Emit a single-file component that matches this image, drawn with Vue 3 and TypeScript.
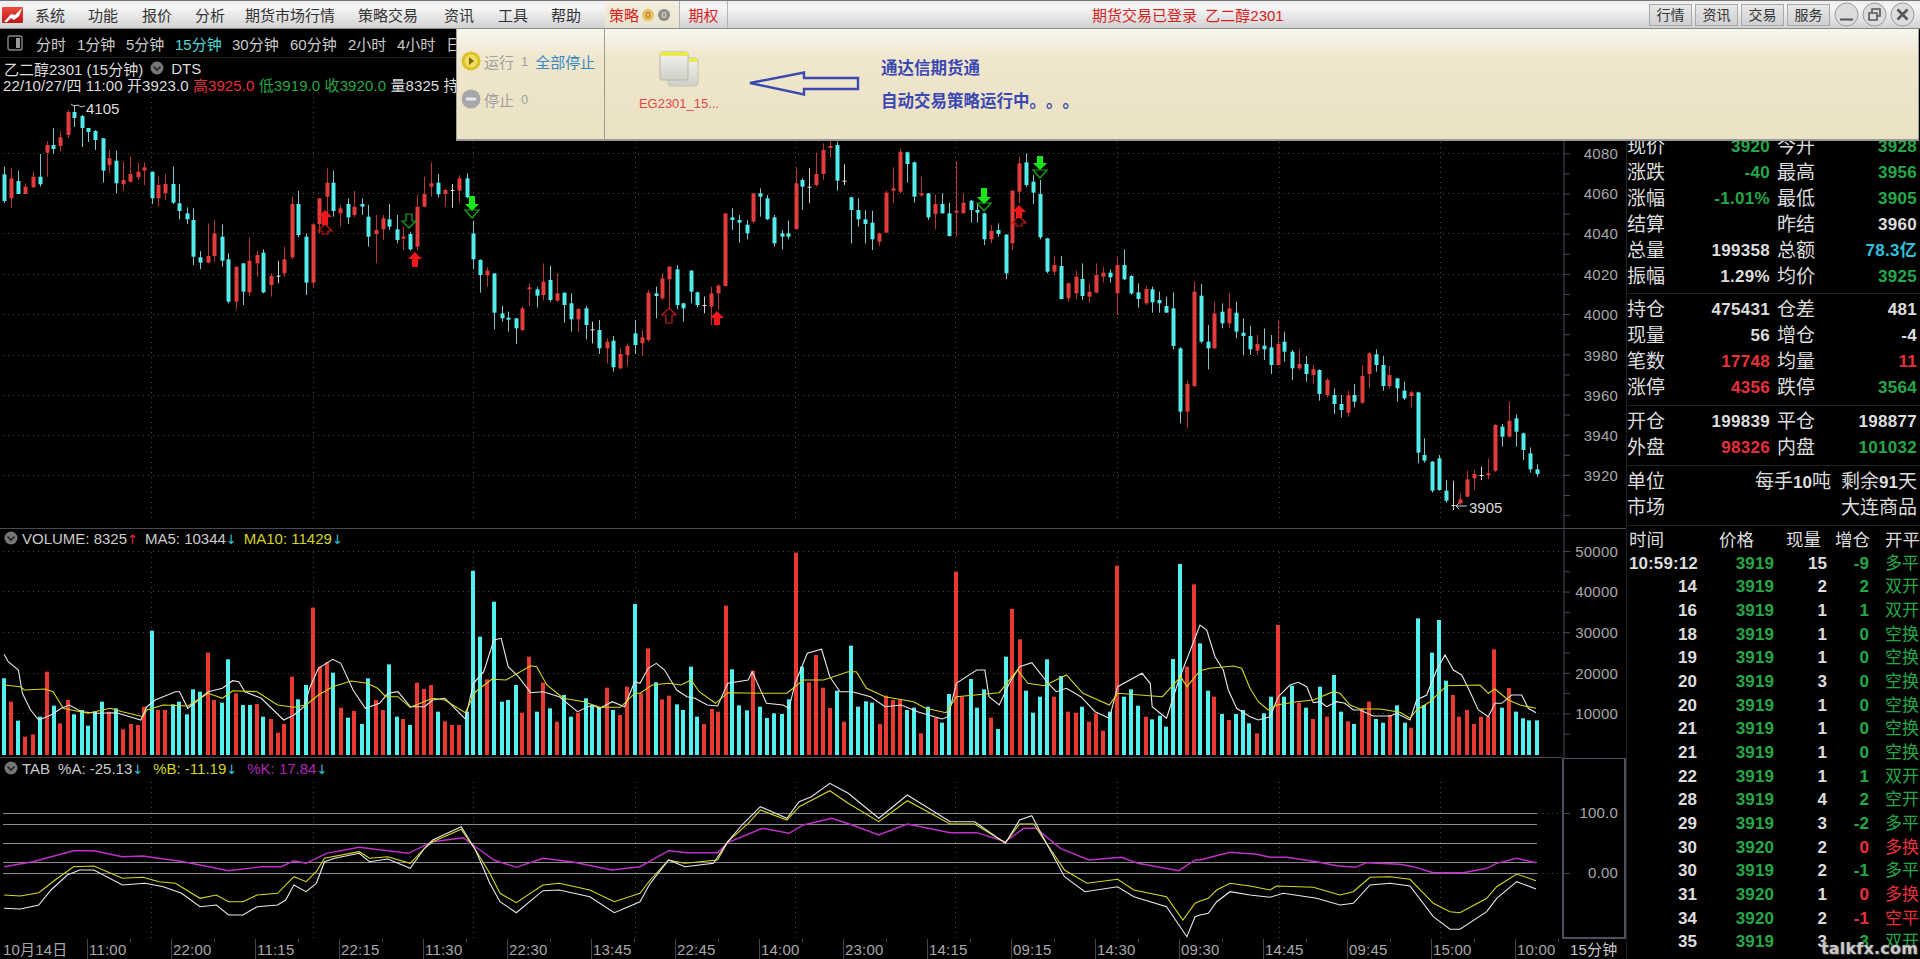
<template>
  <div class="app">
    <!-- top menu bar -->
    <header class="topbar">
      <div class="logo">
        <svg width="21" height="16" viewBox="0 0 21 16">
          <defs>
            <linearGradient id="lg" x1="0" y1="0" x2="0" y2="1">
              <stop offset="0" stop-color="#f04a40" />
              <stop offset="1" stop-color="#b81818" />
            </linearGradient>
          </defs>
          <rect width="21" height="16" rx="1" fill="url(#lg)" />
          <path d="M2 15 L9 7 L13 8 L20 1 L17 9 L12 13 L9 11 L5 15 Z" fill="#fff" />
        </svg>
      </div>
      <nav class="menu">
        <span v-for="m in menus" :key="m">{{ m }}</span>
      </nav>
      <div class="tabs">
        <div class="tab on">
          策略
          <i class="dot gold">0</i>
          <i class="dot grey">0</i>
        </div>
        <div class="tab">期权</div>
      </div>
      <div class="status">期货交易已登录&nbsp; 乙二醇2301</div>
      <div class="sys-btns">
        <span v-for="b in sysBtns" :key="b">{{ b }}</span>
      </div>
      <div class="win-btns">
        <svg width="25" height="25" viewBox="0 0 25 25"><circle cx="12.5" cy="12.5" r="11.5" class="wb" /><path d="M6 17.5h13" stroke="#555" stroke-width="2" /></svg>
        <svg width="25" height="25" viewBox="0 0 25 25"><circle cx="12.5" cy="12.5" r="11.5" class="wb" /><path d="M7 11h8v7H7z M10 11V7h8v7h-3" fill="none" stroke="#555" stroke-width="1.6" /></svg>
        <svg width="25" height="25" viewBox="0 0 25 25"><circle cx="12.5" cy="12.5" r="11.5" class="wb" /><path d="M7.5 7.5l10 10M17.5 7.5l-10 10" stroke="#555" stroke-width="2.6" /></svg>
      </div>
    </header>

    <div class="body">
      <section class="charts">
        <div class="toolbar">
          <svg class="toggle" width="16" height="16" viewBox="0 0 16 16">
            <rect x="1" y="1" width="14" height="14" rx="2" fill="none" stroke="#888" stroke-width="1.4" />
            <rect x="9" y="3" width="4" height="10" fill="#999" />
          </svg>
          <div class="periods">
            <span v-for="p in periods" :key="p" :class="{ cur: p === '15分钟' }">{{ p }}</span>
          </div>
        </div>

        <!-- price pane -->
        <div class="pane price-pane">
          <svg class="plot" width="1626" height="470" viewBox="0 58 1626 470">
            <g class="dots">
              <line v-for="y in priceTicks" :key="y.v" x1="3" x2="1564" :y1="y.y" :y2="y.y" />
              <line v-for="x in vGrid" :key="x" :x1="x" :x2="x" y1="92" y2="520" />
            </g>
            <g v-for="(c, i) in candles" :key="i" :class="c.kind">
              <line class="wick" :x1="c.x + 0.5" :x2="c.x + 0.5" :y1="c.hi" :y2="c.lo" />
              <rect class="bd" :x="c.x - 1.5" :y="c.top" width="4" :height="c.h" />
            </g>
            <polygon v-for="(m, i) in markers" :key="i" :points="m.pts" :class="m.cls" />
            <path d="M71 104l3 2 4-1 3 2 4-1" class="lbl-mark" />
            <text x="86" y="114" class="peak">4105</text>
            <path d="M1467 506h-11l3-3m-3 3l3 3" class="lbl-mark" />
            <text x="1469" y="513" class="peak">3905</text>
            <line x1="1564" x2="1564" y1="58" y2="528" class="axis" />
            <line v-for="y in priceMinor" :key="y" x1="1564" x2="1570" :y1="y" :y2="y" class="axis" />
            <text v-for="y in priceTicks" :key="y.v" x="1618" :y="y.y + 5" class="tick">{{ y.v }}</text>
          </svg>
          <div class="legend-main">
            <div class="l1">
              <span>乙二醇2301 (15分钟)</span>
              <svg class="chev" width="14" height="14" viewBox="0 0 14 14"><circle cx="7" cy="7" r="6.5" fill="#777" /><path d="M3.5 5.5L7 9l3.5-3.5" fill="none" stroke="#222" stroke-width="1.6" /></svg>
              <span>DTS</span>
            </div>
            <div class="l2">
              <span>22/10/27/四 11:00 开3923.0 </span>
              <span class="rd">高3925.0 </span>
              <span class="gn">低3919.0 收3920.0 </span>
              <span>量8325 持</span>
            </div>
          </div>
        </div>

        <!-- volume pane -->
        <div class="pane vol-pane">
          <svg class="plot" width="1626" height="230" viewBox="0 528 1626 230">
            <g class="dots">
              <line v-for="y in volTicks" :key="y.v" x1="3" x2="1564" :y1="y.y" :y2="y.y" />
              <line v-for="x in vGrid" :key="x" :x1="x" :x2="x" y1="552" y2="755" />
            </g>
            <rect v-for="(b, i) in volBars" :key="i" :x="b.x - 2" :y="b.top" width="4" :height="755 - b.top" :fill="b.red ? '#e83a32' : '#53f0f0'" />
            <polyline :points="ma5" class="ln white" />
            <polyline :points="ma10" class="ln yellow" />
            <line x1="0" x2="1626" y1="528.5" y2="528.5" class="axis" />
            <line x1="0" x2="1562" y1="757.5" y2="757.5" class="axis" />
            <line x1="1564" x2="1564" y1="528" y2="758" class="axis" />
            <line v-for="y in volMinor" :key="y" x1="1564" x2="1570" :y1="y" :y2="y" class="axis" />
            <text v-for="y in volTicks" :key="y.v" x="1618" :y="y.y + 5" class="tick">{{ y.v }}</text>
          </svg>
          <div class="legend">
            <svg class="chev" width="14" height="14" viewBox="0 0 14 14"><circle cx="7" cy="7" r="6.5" fill="#777" /><path d="M3.5 5.5L7 9l3.5-3.5" fill="none" stroke="#222" stroke-width="1.6" /></svg>
            <span class="w">VOLUME: 8325<b class="ar rd">↑</b></span>
            <span class="w">MA5: 10344<b class="ar cy">↓</b></span>
            <span class="yl">MA10: 11429<b class="ar cy">↓</b></span>
          </div>
        </div>

        <!-- TAB pane -->
        <div class="pane tab-pane">
          <svg class="plot" width="1626" height="181" viewBox="0 758 1626 181">
            <g class="dots">
              <line v-for="x in vGrid" :key="x" :x1="x" :x2="x" y1="782" y2="939" />
              <line x1="1537" x2="1564" y1="813.5" y2="813.5" />
              <line x1="1537" x2="1564" y1="873.5" y2="873.5" />
            </g>
            <line v-for="y in tabLevels" :key="y" x1="3" x2="1537" :y1="y" :y2="y" class="level" />
            <polyline :points="tabK" class="ln purple" />
            <polyline :points="tabB" class="ln yellow" />
            <polyline :points="tabA" class="ln white" />
            <rect x="1563" y="758" width="62" height="180" class="tab-box" />
            <line x1="1564" x2="1570" y1="813.5" y2="813.5" class="axis" />
            <line x1="1564" x2="1570" y1="873.5" y2="873.5" class="axis" />
            <text x="1618" y="818" class="tick">100.0</text>
            <text x="1618" y="878" class="tick">0.00</text>
          </svg>
          <div class="legend t">
            <svg class="chev" width="14" height="14" viewBox="0 0 14 14"><circle cx="7" cy="7" r="6.5" fill="#777" /><path d="M3.5 5.5L7 9l3.5-3.5" fill="none" stroke="#222" stroke-width="1.6" /></svg>
            <span class="w tabname">TAB</span>
            <span class="w">%A: -25.13<b class="ar cy">↓</b></span>
            <span class="yl">%B: -11.19<b class="ar cy">↓</b></span>
            <span class="pu">%K: 17.84<b class="ar cy">↓</b></span>
          </div>
        </div>

        <div class="timeaxis">
          <span class="first">10月14日</span>
          <span v-for="t in times" :key="t" class="tm">{{ t }}</span>
          <span class="per">15分钟</span>
        </div>
      </section>

      <!-- quote panel -->
      <aside class="quote">
        <div class="block">
          <div v-for="r in quoteA" :key="r[0]" class="row">
            <span>{{ r[0] }}</span><b :class="r[2]">{{ r[1] }}</b><span class="l2nd">{{ r[3] }}</span><b :class="r[5]">{{ r[4] }}</b>
          </div>
        </div>
        <div class="block">
          <div v-for="r in quoteB" :key="r[0]" class="row">
            <span>{{ r[0] }}</span><b :class="r[2]">{{ r[1] }}</b><span class="l2nd">{{ r[3] }}</span><b :class="r[5]">{{ r[4] }}</b>
          </div>
        </div>
        <div class="block">
          <div v-for="r in quoteC" :key="r[0]" class="row">
            <span>{{ r[0] }}</span><b :class="r[2]">{{ r[1] }}</b><span class="l2nd">{{ r[3] }}</span><b :class="r[5]">{{ r[4] }}</b>
          </div>
        </div>
        <div class="block">
          <div class="row wide">
            <span>单位</span>
            <div class="right"><span>每手<b>10</b>吨</span><span>剩余<b>91</b>天</span></div>
          </div>
          <div class="row wide">
            <span>市场</span>
            <div class="right"><span>大连商品</span></div>
          </div>
        </div>
        <div class="ticks">
          <div class="thead">
            <span>时间</span><span>价格</span><span>现量</span><span>增仓</span><span>开平</span>
          </div>
          <div v-for="(t, i) in tickRows" :key="i" class="trow">
            <b>{{ t[0] }}</b>
            <b class="gn">{{ t[1] }}</b>
            <b>{{ t[2] }}</b>
            <b :class="t[5]">{{ t[3] }}</b>
            <span :class="t[5]">{{ t[4] }}</span>
          </div>
        </div>
      </aside>
    </div>

    <!-- strategy popup over the chart -->
    <div class="popup">
      <div class="pop-left">
        <div class="pop-row">
          <svg width="20" height="20" viewBox="0 0 20 20"><circle cx="10" cy="10" r="9.5" fill="#dcc028" /><circle cx="10" cy="10" r="6.5" fill="#f0dc60" /><path d="M8 6l5 4-5 4z" fill="#7a6a10" /></svg>
          <span class="st">运行</span><span class="num">1</span>
          <a class="stopall">全部停止</a>
        </div>
        <div class="pop-row second">
          <svg width="20" height="20" viewBox="0 0 20 20"><circle cx="10" cy="10" r="9.5" fill="#a8a8ac" /><rect x="5" y="8.5" width="10" height="3" fill="#e8e8e8" /></svg>
          <span class="st">停止</span><span class="num">0</span>
        </div>
      </div>
      <div class="pop-main">
        <div class="strategy">
          <svg width="40" height="36" viewBox="0 0 40 36">
            <defs>
              <linearGradient id="dc" x1="0" y1="0" x2="0" y2="1">
                <stop offset="0" stop-color="#f4f4f0" />
                <stop offset="1" stop-color="#cfcfc8" />
              </linearGradient>
            </defs>
            <rect x="9" y="7" width="30" height="28" rx="3" fill="url(#dc)" stroke="#c8c4b0" />
            <rect x="30" y="7" width="8" height="4" fill="#ece850" />
            <rect x="1" y="1" width="28" height="28" rx="2" fill="url(#dc)" stroke="#b8b6a8" />
            <rect x="1" y="1" width="28" height="4" fill="#ece850" />
          </svg>
          <span class="sname">EG2301_15...</span>
        </div>
        <svg class="arrow" width="112" height="25" viewBox="0 0 112 25">
          <polygon points="2,12 56,1.5 56,7 110,7 110,18 56,18 56,23.5" fill="none" stroke="#3b49b0" stroke-width="2.4" />
        </svg>
        <div class="note">
          <div>通达信期货通</div>
          <div>自动交易策略运行中。。。</div>
        </div>
      </div>
    </div>

    <div class="watermark">talkfx.com</div>
  </div>
</template>

<script setup lang="ts">
const menus = ['系统', '功能', '报价', '分析', '期货市场行情', '策略交易', '资讯', '工具', '帮助']
const sysBtns = ['行情', '资讯', '交易', '服务']
const periods = ['分时', '1分钟', '5分钟', '15分钟', '30分钟', '60分钟', '2小时', '4小时', '日']
const times = ['11:00', '22:00', '11:15', '22:15', '11:30', '22:30', '13:45', '22:45', '14:00', '23:00', '14:15', '09:15', '14:30', '09:30', '14:45', '09:45', '15:00', '10:00']

const vGrid = [151, 313, 473, 635, 795, 955, 1117, 1279, 1440].map(v => v + 0.5)

const priceTicks = [
  { v: 4080, y: 153.5 }, { v: 4060, y: 193.5 }, { v: 4040, y: 233.5 }, { v: 4020, y: 274.5 }, { v: 4000, y: 314.5 },
  { v: 3980, y: 355.5 }, { v: 3960, y: 395.5 }, { v: 3940, y: 435.5 }, { v: 3920, y: 475.5 },
]
const priceMinor = Array.from({ length: 22 }, (_, i) => 93.5 + i * 20.1)
const volTicks = [
  { v: 50000, y: 551.5 }, { v: 40000, y: 591.5 }, { v: 30000, y: 632.5 }, { v: 20000, y: 673.5 }, { v: 10000, y: 713.5 },
]
const volMinor = Array.from({ length: 10 }, (_, i) => 551.5 + i * 20.3)
const tabLevels = [813.5, 824.5, 843.5, 862.5, 873.5]

// values below are read off the 3x crops: [x in crop, y in crop]
function bars(src: string, base: number, sx: number) {
  return src.trim().split(/\s+/).map(t => {
    const [a, b] = t.slice(1).split(',').map(Number)
    return { x: Math.round(base + a / sx), red: t[0] === 'r', top: 520 + b / 3 }
  })
}

const volBars = [
  ...bars(`c10,475 r28,545 c44,602 r62,650 r80,643 c97,590 r114,455 c132,557 r148,610 r167,540 c182,583 c200,570 c215,617 c233,575 c251,545 r267,575 c285,565 r302,628 r320,612 r337,615 r354,560 c372,332 r388,570 r405,570 c423,553 c438,545 c457,583 c474,508 c491,515 r509,398 r525,540 c544,548 c559,418 r577,520 c595,555 c612,555 r630,552 c645,590 r663,597 r680,638 r697,612 r715,470 c730,538 c749,495 r767,263 r784,440 r801,427 c815,458 r835,563 c853,593 r868,573 c886,612 c902,475 r920,540 r938,570 c953,433 c972,590 r988,597 c1005,615 r1021,488 r1038,507 r1057,495 c1073,575 r1091,604 r1107,615 r1125,615 c1143,575 c1159,152 c1177,350 r1193,478 c1211,245 c1229,545 c1245,540 c1263,495 r1280,578 r1297,410 c1315,575 r1331,488 c1348,565 r1365,605 c1382,525 c1400,590 r1417,578 c1435,535 c1450,557 c1468,563 r1486,503 c1503,570 r1520,585 r1537,500 c1555,252`, 0, 2.45),
  ...bars(`r2,520 r19,385 c38,487 r54,538 r71,527 c90,553 c106,570 c124,440 c140,590 r157,612 r176,567 r191,575 r210,257 c225,448 c243,556 c262,571 r278,452 c295,560 c311,594 c329,580 c348,582 c364,538 r381,98 c397,440 r415,487 r430,405 r449,503 r466,564 c483,512 r501,605 c516,377 c534,560 c553,544 c568,548 r587,612 r603,527 r620,540 r637,540 c654,570 c672,563 r688,640 c706,560 r724,593 c740,608 c757,522 r773,155 r790,530 c810,477 c826,563 c844,508 r860,593 c877,627 c896,410 r911,267 r930,358 c945,512 c963,578 c981,530 c997,418 r1015,530 c1031,468 r1048,575 r1067,578 c1083,560 r1101,605 r1117,580 r1134,632 c1152,575 r1169,137 c1187,530 c1203,508 c1220,557 r1239,590 c1255,598 c1273,587 c1288,620 c1306,417 c1322,132 r1340,440 r1358,193`, 640, 2.45),
  ...bars(`c0,370 c24,512 r43,530 c65,582 r88,600 c107,582 c128,570 c148,610 r170,640 c193,580 c212,530 r234,315 c253,530 c275,497 r297,548 c318,563 r339,597 c359,500 r381,590 c403,465 c422,575 r444,604 c463,612 r486,565 r508,545 c527,597 c549,608 r569,585 c590,556 c614,608 r632,623 c654,295 c673,555 c696,398 c717,300 c737,482 r760,525 r778,590 r800,570 r823,612 r842,590 r863,590 r883,388 c905,563 r928,504 c947,575 c968,595 c988,601 c1010,601`, 1200, 3),
]

function line(segs: [number, number, string][]) {
  return segs.map(([base, sx, s]) =>
    s.trim().split(/\s+/).map(p => {
      const [a, b] = p.split(',').map(Number)
      return `${(base + a / sx).toFixed(1)},${(520 + b / 3).toFixed(1)}`
    }).join(' ')
  ).join(' ')
}

const ma5 = line([
  [0, 2.45, '10,403 20,425 45,450 55,520 75,570 95,600 125,585 150,565 170,555 200,575 240,580 285,578 345,600 360,560 380,540 430,515 440,515 460,565 510,515 545,505 570,482 585,485 600,515 640,535 695,600 720,585 745,560 760,500 780,445 815,418 835,430 865,510 895,565 930,550 950,520 975,515 1005,560 1040,560 1060,540 1090,535 1140,597 1160,490 1185,455 1210,360 1228,355 1245,440 1270,470 1300,518 1330,515 1370,530 1415,575 1450,555 1470,565 1500,545 1530,560 1555,485'],
  [640, 2.45, '0,490 20,445 40,430 60,450 90,510 115,530 135,535 165,555 190,558 215,490 265,480 275,455 310,550 350,555 365,565 380,490 410,400 445,388 465,470 490,515 520,515 565,530 600,560 640,555 680,575 740,597 755,590 775,490 825,450 845,450 855,530 880,555 905,490 930,440 960,428 1000,490 1020,515 1045,505 1080,530 1115,575 1150,595 1170,500 1230,460 1250,490 1255,560 1290,595 1320,480'],
  [1200, 3, '0,315 20,330 45,410 70,450 85,510 110,565 150,590 175,600 210,590 235,530 270,495 295,487 320,500 340,548 360,545 380,560 410,545 435,550 460,570 480,570 520,588 570,588 590,580 630,600 650,540 680,525 710,450 735,405 760,450 785,465 810,515 835,570 865,590 885,550 905,550 935,525 965,525 985,565 1008,578'],
])
const ma10 = line([
  [0, 2.45, '10,495 50,500 60,510 110,507 130,515 155,565 175,570 215,580 270,565 300,575 350,590 360,570 400,555 460,558 510,520 545,535 570,512 630,515 680,555 720,562 750,555 780,525 815,500 860,483 900,490 925,505 945,530 975,530 1005,562 1060,535 1090,540 1140,578 1165,515 1205,478 1240,480 1300,437 1315,440 1340,495 1380,535 1430,545 1470,562 1520,562 1555,520'],
  [640, 2.45, '0,520 30,495 70,490 100,495 125,480 145,515 185,550 215,518 300,520 360,520 400,480 450,480 510,455 530,455 555,505 600,530 670,545 700,565 750,578 775,530 880,518 925,450 950,490 990,497 1045,465 1085,520 1150,555 1170,520 1280,530 1325,470 1340,500'],
  [1200, 3, '0,452 30,445 100,438 125,445 150,505 175,545 205,570 230,555 290,545 340,540 400,515 420,520 450,555 480,567 540,567 600,577 630,595 650,570 690,545 740,497 840,495 865,520 885,507 925,540 960,555 1008,565'],
])
const tabA = line([
  [0, 2.45, '10,1165 50,1167 95,1155 125,1110 165,1065 195,1050 230,1050 300,1095 355,1090 400,1100 445,1120 490,1160 530,1155 560,1185 595,1185 630,1160 680,1155 700,1140 720,1095 750,1115 775,1090 795,1025 820,1015 880,1000 905,1025 950,1017 1005,1045 1040,985 1060,960 1130,920 1165,990 1200,1090 1225,1145 1265,1178 1330,1112 1370,1110 1445,1130 1505,1178'],
  [640, 2.45, '0,1145 25,1090 70,1020 110,1040 180,1030 215,965 250,915 295,860 360,895 390,845 420,830 465,790 510,820 585,895 655,825 760,905 820,905 895,970 930,900 960,887 985,945 1040,1070 1090,1115 1170,1100 1210,1130 1290,1160 1340,1250 1360,1190'],
  [1200, 3, '0,1185 25,1180 50,1145 90,1115 150,1125 210,1132 250,1120 350,1135 420,1155 460,1150 510,1095 570,1090 630,1098 700,1190 750,1228 780,1228 860,1175 890,1135 950,1085 1008,1107'],
])
const tabB = line([
  [0, 2.45, '10,1125 50,1128 95,1118 135,1080 180,1040 230,1038 300,1075 350,1072 390,1085 430,1090 490,1135 530,1125 560,1145 595,1145 630,1125 680,1120 720,1070 750,1085 775,1055 795,1015 880,995 905,1015 950,1010 1005,1030 1040,985 1060,965 1130,928 1165,990 1200,1060 1225,1120 1265,1148 1330,1095 1370,1090 1445,1110 1505,1145'],
  [640, 2.45, '0,1120 25,1080 70,1020 110,1030 190,1020 215,965 265,910 295,870 360,900 390,860 465,812 510,850 585,905 655,842 760,912 820,912 895,968 930,912 965,912 985,950 1040,1050 1095,1090 1170,1078 1210,1110 1290,1130 1330,1200 1360,1150'],
  [1200, 3, '0,1143 25,1135 50,1110 90,1090 150,1098 210,1110 230,1098 340,1102 420,1125 460,1115 510,1072 570,1070 630,1078 700,1150 750,1175 780,1178 860,1135 890,1100 950,1062 1008,1082'],
])
const tabK = line([
  [0, 2.45, '10,1040 80,1025 180,992 230,992 300,1010 350,1008 450,1025 560,1052 640,1040 690,1040 720,1022 750,1030 800,1000 880,982 1000,1000 1060,965 1135,953 1170,985 1210,1020 1265,1042 1330,1015 1400,1025 1500,1050'],
  [640, 2.45, '0,1040 70,992 115,998 190,998 215,968 300,925 365,940 400,915 470,895 520,915 585,945 655,912 760,938 825,938 895,965 940,925 970,925 1030,985 1100,1020 1180,1012 1220,1030 1320,1052 1360,1020'],
  [1200, 3, '0,1020 90,997 170,1003 210,1012 260,1012 350,1025 410,1037 465,1042 500,1028 600,1033 640,1040 700,1058 790,1058 860,1045 890,1030 950,1015 1008,1028'],
])

// candles: x kind high bodyTop bodyBottom low
function candleRows(src: string, base: number, ybase: number) {
  return src.trim().split('\n').map(l => {
    const p = l.trim().split(/\s+/)
    const [hi, bt, bb, lo] = p.slice(2).map(v => ybase + Number(v) / 3)
    return {
      x: Math.round(base + Number(p[0]) / 2.45),
      kind: p[1] === 'r' ? 'up' : p[1] === 'c' ? 'down' : 'flat',
      hi,
      lo,
      top: bt,
      h: Math.max(bb - bt, 2),
    }
  })
}

const candles = [
  ...candleRows(`10 c 110 133 213 218
28 r 115 145 205 233
44 c 122 153 192 192
62 r 160 170 192 192
80 r 125 140 172 175
97 c 72 140 163 170
114 r 33 45 68 140
130 c -6 45 57 72
148 r 3 22 48 65
166 r -60 -54 15 24
182 c -75 -54 -36 -9
200 c -45 -42 -6 51
215 c -6 -6 6 36
233 c 0 3 30 60
252 c 25 25 122 158
267 r 60 85 105 130
285 c 62 92 160 190
302 r 95 150 162 182
319 r 80 132 155 158
337 r 98 125 142 150
354 r 98 112 122 165
372 c 125 125 205 222
388 r 140 165 205 230
405 r 132 162 190 210
423 c 110 162 218 222
438 c 162 220 243 268
457 c 232 250 268 282
472 c 235 270 380 405
491 c 363 382 398 418
509 r 280 378 398 400
525 r 270 310 378 395
543 c 283 320 392 410
558 c 370 388 515 520
577 r 410 410 515 538
595 c 400 400 485 525
610 r 322 392 487 498
629 r 362 375 400 440
645 c 358 368 487 490
663 r 430 438 465 500
680 w 392 437 440 460
696 r 350 388 430 440
715 r 200 222 382 388
730 c 183 222 315 322
749 c 310 320 458 495
767 r 280 283 458 472
782 r 205 205 282 310
800 r 115 158 200 260
815 c 122 158 243 260
834 r 225 235 250 290
852 c 205 222 262 282
868 r 183 230 255 262
886 c 205 222 230 255
902 c 225 260 320 350
920 r 255 300 312 400
938 r 255 265 298 330
953 c 222 268 290 300
972 c 255 298 330 340
988 r 290 320 325 360
1005 c 305 312 358 362
1021 r 195 230 350 362
1040 r 140 192 230 232
1057 r 97 160 170 200
1073 c 132 158 193 202
1091 r 175 180 192 230
1107 w 162 180 184 233
1125 r 135 145 182 218
1143 c 130 145 202 205
1159 c 272 310 388 418
1177 c 388 390 435 488
1192 r 412 422 436 470
1211 c 430 430 548 598
1229 c 527 550 565 575
1245 c 545 563 567 605
1263 c 565 565 595 642
1279 r 528 535 600 605
1297 r 460 472 475 528
1315 c 470 478 497 532
1330 r 400 455 495 512
1348 c 407 450 510 515
1364 r 430 490 512 516
1383 c 488 488 525 578
1400 c 490 520 568 605
1416 r 535 537 568 605
1435 c 528 535 585 628
1450 w 575 598 600 640
1468 c 570 600 655 672
1486 r 625 635 655 700
1502 c 618 632 712 725
1520 r 655 672 715 718
1537 r 640 648 675 710
1555 c 570 610 645 672`, 0, 130),
  ...candleRows(`4 r 600 622 640 678
19 r 480 488 630 635
38 c 470 490 498 565
54 r 430 445 505 510
71 r 408 410 448 535
90 c 405 418 525 538
106 c 518 520 535 575
124 c 420 422 485 520
140 c 485 487 525 532
157 w 500 525 530 550
175 r 470 490 530 585
191 r 462 467 490 540
209 r 250 250 468 470
225 c 235 262 270 300
243 c 255 270 278 338
262 c 270 284 310 328
277 r 190 190 275 280
295 c 175 190 200 260
311 c 195 205 268 270
329 c 255 262 340 350
348 c 300 310 320 358
363 c 272 310 320 328
381 r 112 160 297 300
397 c 145 150 170 240
414 w 115 170 172 220
430 r 68 132 165 170
448 r 40 60 132 150
466 r 30 48 53 82
482 c 35 45 152 182
499 w 103 152 156 165
516 c 200 202 240 340
534 c 205 240 268 290
552 c 240 268 282 340
568 c 242 278 328 360
585 r 308 310 335 348
602 r 182 188 308 310
620 r 112 175 182 220
638 r 55 65 185 190
654 c 65 67 102 158
672 c 95 97 200 218
688 r 140 190 195 200
706 c 190 190 262 270
723 r 195 222 252 298
740 c 190 222 250 250
757 c 218 250 318 320
773 r 95 242 248 320
791 r 190 218 250 250
810 c 210 212 240 278
826 c 220 240 248 278
843 c 248 250 328 345
859 r 285 302 328 340
877 c 280 300 312 320
896 c 312 314 430 448
911 r 180 182 340 360
929 r 80 100 185 220
945 c 70 97 165 170
963 c 135 155 188 222
981 c 150 192 322 328
997 c 325 325 425 430
1015 r 380 405 425 435
1031 c 378 408 507 508
1048 r 457 460 505 515
1067 r 422 440 490 508
1083 c 400 447 498 510
1101 r 460 485 500 518
1116 r 400 435 488 490
1134 r 410 428 440 458
1152 c 418 428 442 458
1169 r 380 405 490 555
1187 c 358 405 448 450
1203 c 435 438 490 495
1220 c 460 487 507 533
1239 r 468 477 520 525
1255 c 470 478 517 548
1272 c 485 510 520 548
1288 c 500 528 548 548
1306 c 487 535 648 658`, 640, 130),
  ...candleRows(`440 c 262 265 455 490
458 r 362 372 455 505
476 r 65 95 378 382
492 c 72 107 245 250
510 c 195 245 265 328
525 r 125 160 265 268
544 c 130 155 190 205
562 r 100 145 190 205
578 c 125 158 215 235
595 c 175 218 228 285
612 c 197 228 268 285
630 r 225 252 272 285
648 c 205 257 268 300
663 c 225 262 315 342
681 r 180 252 315 318
697 c 215 245 275 305
715 c 270 275 325 360
733 r 268 312 325 330
749 c 288 312 342 365
767 r 315 328 345 370
782 c 328 330 402 422
800 r 355 360 405 412
819 c 385 405 432 462
835 c 405 432 450 472
853 r 392 405 458 470
868 c 372 405 425 442
886 r 315 348 428 432
905 r 275 280 342 385
921 c 268 283 315 335
938 c 288 315 378 392
953 r 318 345 378 385
972 c 355 355 385 425
991 c 365 392 415 420
1006 r 392 397 408 442
1024 c 395 397 578 610
1040 c 535 585 602 608
1058 c 603 605 692 698
1076 c 585 595 690 692
1092 c 660 692 722 728
1110 w 662 735 738 750
1126 r 700 718 730 735
1144 r 632 658 710 710
1162 r 630 642 655 690
1178 w 620 645 648 660
1196 r 595 640 645 658
1212 r 492 495 632 636
1230 c 492 500 530 560
1248 r 425 482 530 532
1264 c 463 475 515 560
1282 c 518 520 570 600
1298 c 562 580 628 638
1316 c 613 628 642 650`, 1000, 260),
]

// buy / sell arrows drawn on the candles
function arrow(x: number, y0: number, y1: number, up: boolean, cls: string) {
  const tip = up ? y0 : y1
  const neck = up ? y0 + 7 : y1 - 7
  const end = up ? y1 : y0
  return {
    cls,
    pts: `${x},${tip} ${x + 7},${neck} ${x + 3},${neck} ${x + 3},${end} ${x - 3},${end} ${x - 3},${neck} ${x - 7},${neck}`,
  }
}
function chevron(x: number, y0: number, y1: number, cls: string) {
  return { cls, pts: `${x - 7},${y0} ${x + 7},${y0} ${x},${y1}` }
}

const markers = [
  arrow(325, 224, 234, true, 'm-red-o'),
  arrow(325, 210, 225, true, 'm-red'),
  arrow(409, 214, 228, false, 'm-green-o'),
  arrow(415, 252, 267, true, 'm-red'),
  arrow(472, 196, 211, false, 'm-green'),
  chevron(472, 210, 218, 'm-green-o'),
  arrow(669, 308, 323, true, 'm-red-o'),
  arrow(717, 311, 325, true, 'm-red'),
  arrow(984, 188, 204, false, 'm-green'),
  chevron(984, 203, 211, 'm-green-o'),
  arrow(1019, 216, 226, true, 'm-red-o'),
  arrow(1019, 205, 218, true, 'm-red'),
  arrow(1040, 156, 170, false, 'm-green'),
  chevron(1040, 170, 178, 'm-green-o'),
]

const quoteA = [
  ['现价', '3920', 'gn', '今开', '3928', 'gn'],
  ['涨跌', '-40', 'gn', '最高', '3956', 'gn'],
  ['涨幅', '-1.01%', 'gn', '最低', '3905', 'gn'],
  ['结算', '', '', '昨结', '3960', ''],
  ['总量', '199358', '', '总额', '78.3亿', 'cy'],
  ['振幅', '1.29%', '', '均价', '3925', 'gn'],
]
const quoteB = [
  ['持仓', '475431', '', '仓差', '481', ''],
  ['现量', '56', '', '增仓', '-4', ''],
  ['笔数', '17748', 'rd', '均量', '11', 'rd'],
  ['涨停', '4356', 'rd', '跌停', '3564', 'gn'],
]
const quoteC = [
  ['开仓', '199839', '', '平仓', '198877', ''],
  ['外盘', '98326', 'rd', '内盘', '101032', 'gn'],
]

const tickRows = [
  ['10:59:12', '3919', '15', '-9', '多平', 'gn'],
  ['14', '3919', '2', '2', '双开', 'gn'],
  ['16', '3919', '1', '1', '双开', 'gn'],
  ['18', '3919', '1', '0', '空换', 'gn'],
  ['19', '3919', '1', '0', '空换', 'gn'],
  ['20', '3919', '3', '0', '空换', 'gn'],
  ['20', '3919', '1', '0', '空换', 'gn'],
  ['21', '3919', '1', '0', '空换', 'gn'],
  ['21', '3919', '1', '0', '空换', 'gn'],
  ['22', '3919', '1', '1', '双开', 'gn'],
  ['28', '3919', '4', '2', '空开', 'gn'],
  ['29', '3919', '3', '-2', '多平', 'gn'],
  ['30', '3920', '2', '0', '多换', 'rd'],
  ['30', '3919', '2', '-1', '多平', 'gn'],
  ['31', '3920', '1', '0', '多换', 'rd'],
  ['34', '3920', '2', '-1', '空平', 'rd'],
  ['35', '3919', '3', '3', '双开', 'gn'],
]
</script>

<style>
html,
body {
  margin: 0;
  background: #000;
}
</style>

<style scoped>
.app {
  position: relative;
  width: 1920px;
  height: 959px;
  overflow: hidden;
  background: #000;
  display: flex;
  flex-direction: column;
  font-family: "Liberation Sans", "Noto Sans CJK SC", sans-serif;
  color: #ddd;
}

.topbar {
  height: 29px;
  box-sizing: border-box;
  display: flex;
  align-items: center;
  flex: none;
  background: linear-gradient(#ededed 0%, #f6f6f6 25%, #d2d2d2 100%);
  border-top: 1px solid #777;
  border-bottom: 1px solid #8a8a8a;
}
.logo {
  width: 35px;
  padding-left: 2px;
  box-sizing: border-box;
  display: flex;
  align-items: center;
  flex: none;
}
.menu {
  display: grid;
  grid-template-columns: 53px 54px 53px 50px 113px 86px 54px 53px 54px;
  width: 570px;
  flex: none;
  font-size: 15px;
  color: #333;
}
.tabs {
  display: flex;
  height: 27px;
  flex: none;
}
.tab {
  width: 48px;
  display: flex;
  align-items: center;
  justify-content: center;
  color: #d8201c;
  font-size: 15px;
  border-right: 1px solid #b4b4b4;
  box-sizing: border-box;
}
.tab.on {
  width: 75px;
  gap: 3px;
  justify-content: flex-start;
  padding-left: 4px;
  background: linear-gradient(#f4efe0, #e8e2d0);
}
.dot {
  width: 12px;
  height: 12px;
  border-radius: 50%;
  font-size: 9px;
  font-style: normal;
  text-align: center;
  line-height: 12px;
}
.dot.gold {
  background: #e8c060;
  color: #a06810;
}
.dot.grey {
  background: #8c8c80;
  color: #eee;
  margin-left: 1px;
}
.status {
  flex: none;
  margin-left: 364px;
  width: 192px;
  font-size: 15px;
  color: #d8201c;
  white-space: nowrap;
}
.sys-btns {
  flex: none;
  margin-left: 365px;
  display: flex;
  gap: 3px;
}
.sys-btns span {
  width: 43px;
  height: 22px;
  box-sizing: border-box;
  border: 1px solid #a8a8a8;
  background: linear-gradient(#e8e8e8, #d0d0d0);
  font-size: 14px;
  line-height: 20px;
  text-align: center;
  color: #333;
}
.win-btns {
  flex: none;
  margin-left: 4px;
  display: flex;
  gap: 3px;
}
.wb {
  fill: #dcdcdc;
  stroke: #9a9a9a;
}

.body {
  flex: 1;
  display: flex;
  min-height: 0;
}
.charts {
  width: 1626px;
  flex: none;
  display: flex;
  flex-direction: column;
}
.toolbar {
  height: 29px;
  flex: none;
  box-sizing: border-box;
  display: flex;
  align-items: center;
  border-bottom: 1px solid #222;
}
.toggle {
  margin-left: 7px;
  margin-right: 13px;
}
.periods {
  display: grid;
  grid-template-columns: 41px 49px 49px 57px 58px 58px 49px 49px 30px;
  font-size: 15px;
  color: #ccc;
}
.periods .cur {
  color: #4fd8d8;
}

.pane {
  position: relative;
  flex: none;
}
.plot {
  display: block;
}
.price-pane {
  height: 470px;
}
.vol-pane {
  height: 230px;
}
.tab-pane {
  height: 181px;
}

.dots line {
  stroke: #4a4a4a;
  stroke-width: 1;
  stroke-dasharray: 1 4;
}
.axis {
  stroke: #454a55;
  stroke-width: 1;
}
.up .bd {
  fill: #e23c3c;
}
.up .wick {
  stroke: #b83434;
}
.down .bd {
  fill: #53ecec;
}
.down .wick {
  stroke: #7fc4c8;
}
.flat .bd {
  fill: #e8e8e8;
}
.flat .wick {
  stroke: #d0d0d0;
}
.flat .bd {
  height: 1px;
}
.m-red {
  fill: #f01818;
}
.m-red-o {
  fill: none;
  stroke: #c81818;
  stroke-width: 1.2;
}
.m-green {
  fill: #18e818;
}
.m-green-o {
  fill: none;
  stroke: #18a818;
  stroke-width: 1.2;
}
.lbl-mark {
  fill: none;
  stroke: #ccc;
  stroke-width: 1;
}
.peak {
  fill: #ddd;
  font-size: 15px;
}
.tick {
  fill: #a8a8a8;
  font-size: 15px;
  text-anchor: end;
  letter-spacing: 0.2px;
}
.ln {
  fill: none;
  stroke-width: 1.1;
}
.white {
  stroke: #e8e8e8;
}
.yellow {
  stroke: #d8d820;
}
.purple {
  stroke: #c030c8;
  stroke-width: 1.4;
}
.level {
  stroke: #8c8c8c;
  stroke-width: 1;
}
.tab-box {
  fill: none;
  stroke: #4a5060;
  stroke-width: 2;
}

.legend-main {
  position: absolute;
  left: 3px;
  top: 1px;
  font-size: 15px;
  color: #ddd;
  white-space: nowrap;
}
.l1 {
  height: 18px;
  display: flex;
  align-items: center;
  gap: 7px;
  margin-top: 0;
  padding-left: 1px;
}
.l2 {
  height: 17px;
  line-height: 17px;
  font-size: 15px;
  white-space: pre;
  letter-spacing: 0.1px;
}
.legend {
  position: absolute;
  left: 4px;
  top: 2px;
  display: flex;
  align-items: center;
  gap: 7px;
  font-size: 15px;
  white-space: nowrap;
  height: 16px;
}
.legend.t {
  gap: 10px;
}
.legend .chev {
  margin-right: -3px;
}
.legend.t .chev {
  margin-right: -6px;
}
.tabname {
  margin-right: -2px;
}
.w {
  color: #ccc;
}
.yl {
  color: #d4d41c;
}
.pu {
  color: #b028b8;
}
.ar {
  font-weight: 400;
  font-family: "DejaVu Sans", sans-serif;
  font-size: 13px;
}
.rd {
  color: #e8303c;
}
.gn {
  color: #25a848;
}
.cy {
  color: #30c0dc;
}

.timeaxis {
  flex: 1;
  display: grid;
  grid-template-columns: 87px repeat(17, 84px) 47px 64px;
  font-size: 15px;
  color: #a8a8a8;
  overflow: hidden;
  white-space: nowrap;
  line-height: 22px;
  letter-spacing: 0.2px;
}
.first {
  padding-left: 3px;
}
.tm {
  position: relative;
  border-left: 1px solid #444;
  padding-left: 1px;
}
.tm::after {
  content: "";
  position: absolute;
  left: 42px;
  top: 0;
  width: 1px;
  height: 3px;
  background: #444;
}
.per {
  color: #ccc;
  padding-left: 8px;
}

.quote {
  flex: 1;
  box-sizing: border-box;
  padding-top: 105px;
  border-left: 1px solid #222;
  font-size: 19px;
  color: #ddd;
  overflow: hidden;
}
.block {
  padding: 0 3px 4px 0;
  border-bottom: 1px solid #222;
  margin-bottom: 3px;
}
.block:first-child {
  padding-bottom: 3px;
}
.row {
  height: 26px;
  display: grid;
  grid-template-columns: 40px 103px 38px 1fr;
  column-gap: 0;
  align-items: center;
  line-height: 26px;
  white-space: nowrap;
}
.row > b {
  font-size: 17px;
  text-align: right;
  letter-spacing: 0.3px;
}
.row > b:last-child {
  grid-column: 4;
}
.l2nd {
  margin-left: 7px;
}
.row b {
  font-weight: 700;
}
.row.wide {
  display: flex;
  justify-content: space-between;
}
.right {
  display: flex;
  gap: 10px;
}
.right b {
  font-size: 17px;
}
.ticks {
  padding-left: 2px;
}
.thead {
  height: 24px;
  display: grid;
  grid-template-columns: 90px 67px 49px 50px auto;
  font-size: 17.5px;
  line-height: 24px;
  white-space: nowrap;
  margin-top: -1px;
}
.trow {
  height: 23.67px;
  display: grid;
  grid-template-columns: 68px 77px 53px 42px 50px;
  align-items: center;
  line-height: 18px;
  white-space: nowrap;
}
.trow b {
  font-size: 17px;
  text-align: right;
  letter-spacing: 0.1px;
}
.trow span {
  font-size: 17px;
  padding-left: 16px;
}

.popup {
  position: absolute;
  left: 456px;
  top: 28px;
  width: 1463px;
  height: 113px;
  box-sizing: border-box;
  display: flex;
  background: linear-gradient(#f8f6ee 0%, #efe6cc 28%, #ebe1c4 100%);
  border: 1px solid #a0a0a0;
  border-top-color: #8a8a8a;
  border-bottom: 2px solid #999;
}
.pop-left {
  width: 148px;
  flex: none;
  box-sizing: border-box;
  border-right: 1px solid #9c9c90;
  padding: 22px 0 0 4px;
  font-size: 15px;
}
.pop-row {
  display: flex;
  align-items: center;
  gap: 3px;
  height: 20px;
}
.pop-row.second {
  margin-top: 18px;
}
.st {
  color: #a0a0a0;
  font-size: 15px;
}
.num {
  color: #a0a0a0;
  font-size: 13px;
  margin-left: 4px;
}
.stopall {
  color: #3488c4;
  margin-left: 4px;
  font-size: 15px;
}
.pop-main {
  display: flex;
  align-items: flex-start;
  flex: 1;
}
.strategy {
  width: 84px;
  margin-left: 32px;
  display: flex;
  flex-direction: column;
  align-items: center;
  padding-top: 22px;
  gap: 9px;
}
.sname {
  color: #e04848;
  font-size: 13px;
  white-space: nowrap;
}
.arrow {
  margin: 42px 0 0 27px;
  flex: none;
}
.note {
  margin: 23px 0 0 21px;
  color: #3a48b4;
  font-size: 16.5px;
  font-weight: 700;
  line-height: 33px;
  text-spacing-trim: space-all;
}

.watermark {
  position: absolute;
  right: 2px;
  bottom: 1px;
  font-family: "DejaVu Sans", sans-serif;
  font-weight: 700;
  font-size: 16px;
  letter-spacing: 0.2px;
  color: #c8c8c8;
  text-shadow: 0 0 2px #555, 1px 1px 0 #333;
}
</style>
